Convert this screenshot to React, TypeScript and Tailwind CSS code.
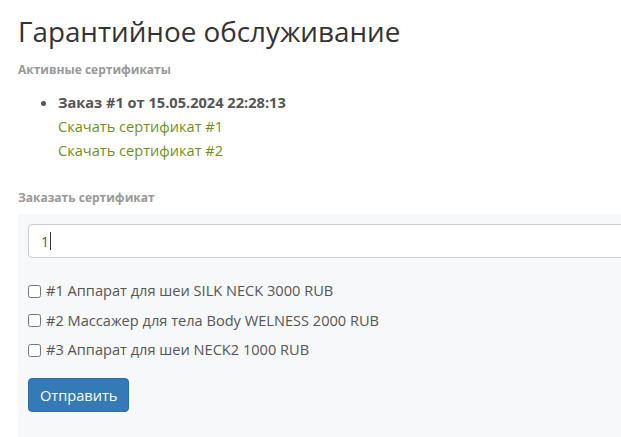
const ITEMS = [
  "#1 Аппарат для шеи SILK NECK 3000 RUB",
  "#2 Массажер для тела Body WELNESS 2000 RUB",
  "#3 Аппарат для шеи NECK2 1000 RUB",
];

export default function App() {
  return (
    <div className="h-[437px] overflow-hidden bg-white font-['Open_Sans',sans-serif] text-[14.6px] text-[#333]">
      <div className="pl-[18px] pt-[12px]">
        <h1 className="text-[27.8px] leading-[38px] font-normal text-[#333]">Гарантийное обслуживание</h1>

        <h5 className="mt-[12px] text-[12px] leading-[16px] font-bold text-[#999]">Активные сертификаты</h5>
        <ul className="mt-[12px] list-disc pl-[40px] text-[#555]">
          <li className="leading-[24px] font-bold">
            Заказ #1 от 15.05.2024 22:28:13
            <div className="font-normal">
              <a className="block leading-[24px] text-[#6f8f1a]">Скачать сертификат #1</a>
              <a className="block leading-[24px] text-[#6f8f1a]">Скачать сертификат #2</a>
            </div>
          </li>
        </ul>

        <h5 className="mt-[28px] text-[12px] leading-[16px] font-bold text-[#999]">Заказать сертификат</h5>

        {/* form panel runs off the right edge */}
        <div className="mt-[8px] w-[720px] bg-[#f7f8fa] px-[10px] pt-[10px] pb-[30px]">
          <div className="flex h-[34px] items-center rounded-[4px] border border-[#ccc] bg-white px-[12px]">
            <span className="text-[14px] text-[#555]">1</span>
            <span className="ml-[1px] h-[18px] w-px bg-[#333]" />
          </div>

          <div className="mt-[23px] flex flex-col gap-[9.5px]">
            {ITEMS.map((t) => (
              <label key={t} className="flex h-[20px] items-center gap-[5px] text-[#555]">
                <input type="checkbox" className="m-0 h-[13px] w-[13px]" />
                <span>{t}</span>
              </label>
            ))}
          </div>

          <button className="mt-[18px] h-[34px] rounded-[4px] border border-[#2e6da4] bg-[#337ab7] px-[11px] pt-[2px] text-white">
            Отправить
          </button>
        </div>
      </div>
    </div>
  );
}
